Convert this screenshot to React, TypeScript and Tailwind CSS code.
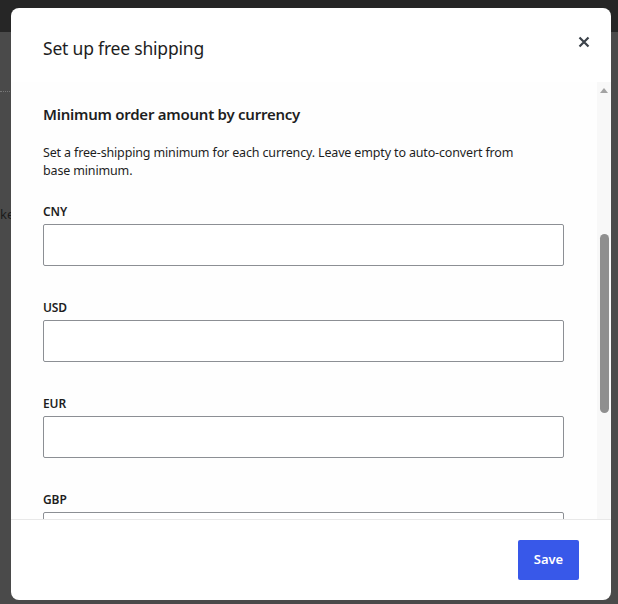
import React from "react";

const font = { fontFamily: '"Segoe UI", "Noto Sans", "Open Sans", sans-serif' };

function Field({ label }: { label: string }) {
  return (
    <div className="flex flex-col">
      <label className="text-[12px] leading-[16px] font-semibold tracking-[-0.1px] text-[#1e1e1e]">{label}</label>
      <input className="mt-[4px] h-[42px] w-[521px] shrink-0 rounded-[2px] border border-[#8c8f94] bg-white" />
    </div>
  );
}

export default function App() {
  return (
    <div className="relative h-[604px] w-[618px] overflow-hidden bg-[#4a4a4a]" style={font}>
      <div className="h-[32px] bg-[#262626]" />
      <div className="mt-[59px] h-0 w-[10px] border-t border-dotted border-[#777]" />
      <div className="mt-[114px] pl-0 text-[13px] leading-[16px] text-[#1a1a1a]">ke</div>

      <div className="absolute left-[11px] top-[8px] flex h-[592px] w-[600px] flex-col overflow-hidden rounded-[8px] bg-white">
        <div className="relative h-[74px] shrink-0 pl-[32px] pt-[28px]">
          <h1 className="text-[17.5px] leading-[24px] font-normal tracking-[-0.2px] text-[#1e1e1e]">Set up free shipping</h1>
          <button className="absolute right-[21px] top-[28px] flex h-[12px] w-[12px] items-center justify-center" aria-label="Close">
            <svg width="12" height="12" viewBox="0 0 12 12">
              <path d="M1.5 1.5 L10.5 10.5 M10.5 1.5 L1.5 10.5" stroke="#3c434a" strokeWidth="2.2" strokeLinecap="butt" />
            </svg>
          </button>
        </div>

        <div className="flex min-h-0 flex-1 flex-row">
          <div className="flex-1 overflow-hidden bg-[#fefefe] pl-[32px] pr-[33px] pt-[22px]">
            <h2 className="text-[15px] leading-[20px] font-semibold tracking-[-0.25px] text-[#1e1e1e]">Minimum order amount by currency</h2>
            <p className="mt-[20px] w-[480px] text-[12.5px] leading-[18px] tracking-[-0.15px] text-[#1e1e1e]">
              Set a free-shipping minimum for each currency. Leave empty to auto-convert from base minimum.
            </p>
            <div className="mt-[24px] flex flex-col gap-[34px]">
              <Field label="CNY" />
              <Field label="USD" />
              <Field label="EUR" />
              <Field label="GBP" />
            </div>
          </div>
          <div className="flex w-[14px] shrink-0 flex-col items-center bg-[#f8f8f8]">
            <svg className="mt-[6px]" width="8" height="5" viewBox="0 0 8 5">
              <path d="M0 5 L4 0 L8 5 Z" fill="#a3a3a3" />
            </svg>
            <div className="mt-[141px] h-[179px] w-[9px] rounded-full bg-[#8f8f8f]" />
          </div>
        </div>

        <div className="flex h-[81px] shrink-0 items-center justify-end border-t border-[#e8e8e8] pr-[32px]">
          <button className="h-[40px] w-[61px] rounded-[2px] bg-[#3858e9] text-[13px] font-semibold text-white">Save</button>
        </div>
      </div>
    </div>
  );
}
